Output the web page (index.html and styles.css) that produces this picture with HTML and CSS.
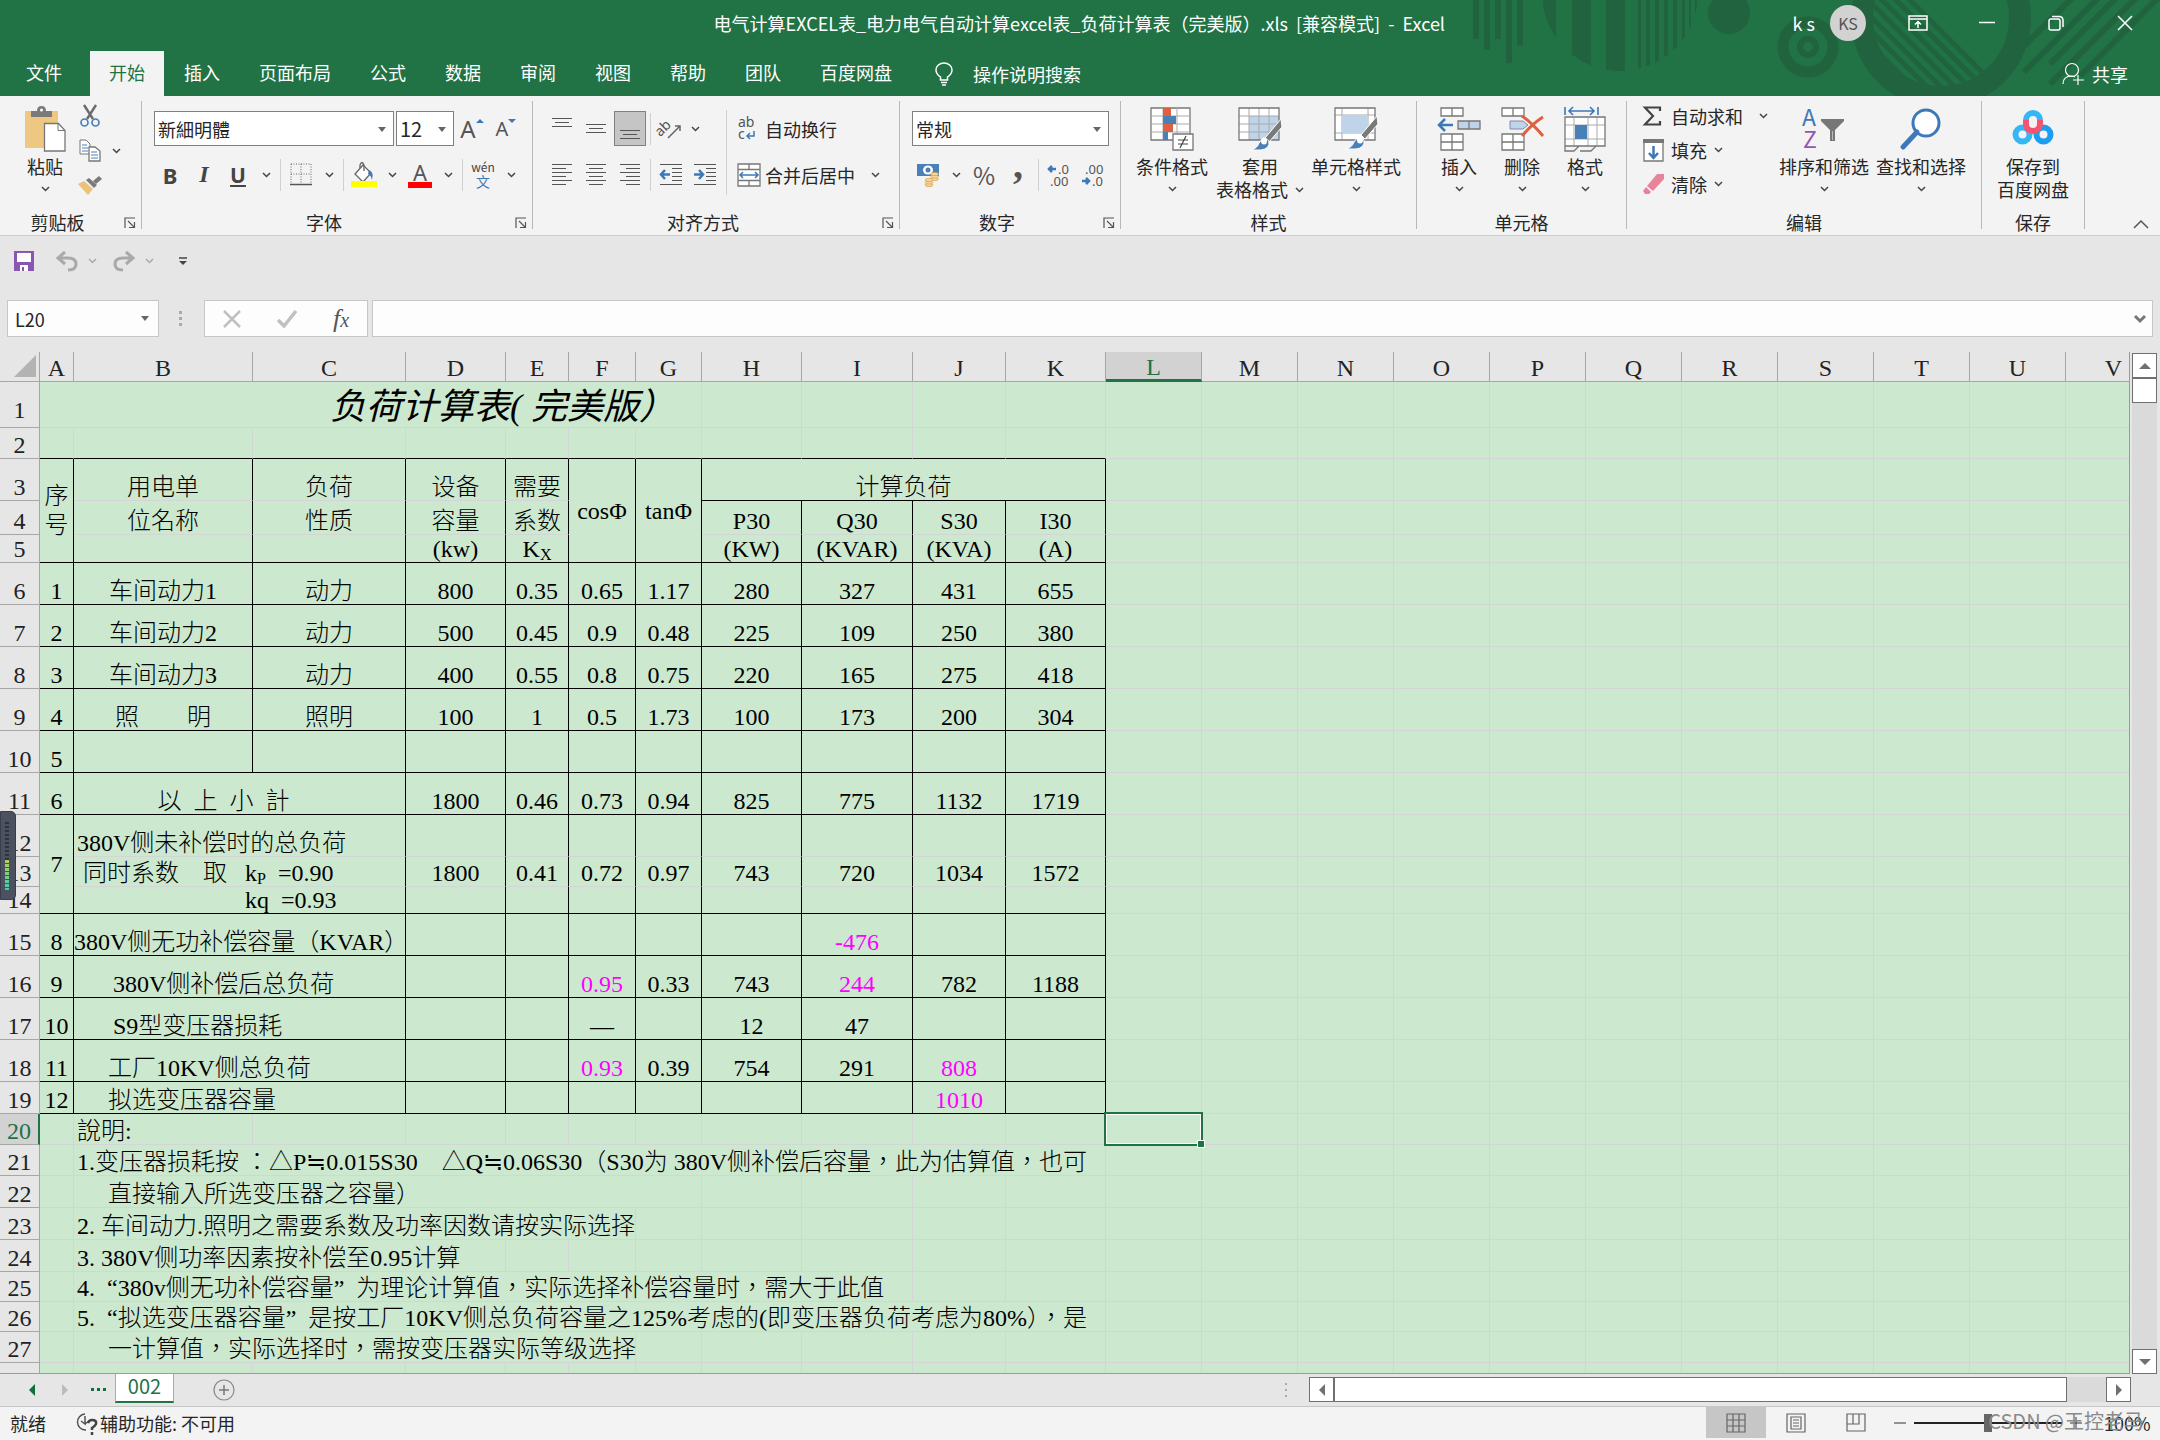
FILE: index.html
```html
<!DOCTYPE html>
<html lang="zh-CN">
<head>
    <meta charset="UTF-8">
    <meta name="viewport" content="width=device-width, initial-scale=1.0">
    <title>负荷计算表（完美版）.xls - Excel</title>
    <link rel="stylesheet" href="styles.css">
</head>
<body>
    <svg width="0" height="0" class="defs">
        <symbol id="chev" viewBox="0 0 9 6"><path d="M1 1l3.500 3.500L8 1" fill="none" stroke="currentColor" stroke-width="1.500"/></symbol>
        <symbol id="launch" viewBox="0 0 12 12"><path d="M1 11V1h10M4 4l6 6M10.500 5v5.500H5" fill="none" stroke="#555" stroke-width="1.200"/></symbol>
    </svg>

    <header class="top">
        <svg class="decor" width="740" height="96" viewBox="0 0 740 96">
            <defs>
                <clipPath id="c1"><circle cx="200" cy="-7" r="78"/></clipPath>
                <clipPath id="c2"><circle cx="521" cy="18" r="68"/></clipPath>
            </defs>
            <path d="M53 0h6v39h-6zM64 0h6v50h-6zM75 0h6v39h-6zM86 0h6v63h-6zM97 0h6v46h-6z"/>
            <path clip-path="url(#c1)" d="M123 0h13v96h-13zM152 0h19v96h-19zM186 0h19v96h-19zM218 0h3v96h-3zM226 0h4v96h-4zM235 0h4v96h-4zM244 0h4v96h-4zM253 0h4v96h-4zM262 0h3v96h-3zM269 0h2v96h-2zM275 0h2v96h-2z"/>
            <circle cx="309" cy="13" r="21"/>
            <g class="rings">
                <circle cx="388" cy="47" r="25" stroke-width="11"/>
                <circle cx="388" cy="47" r="8" stroke-width="6"/>
                <circle cx="521" cy="18" r="79" stroke-width="22"/>
                <path clip-path="url(#c2)" stroke-width="5" d="M400 -6l110 110M414 -6l110 110M428 -6l110 110M442 -6l110 110M456 -6l110 110M470 -6l110 110M484 -6l110 110"/>
                <path stroke-width="6" d="M658 -8l-54 54M684 -8l-80 80M702 -8l-72 72M722 -8l-92 92M744 -8l-84 84"/>
            </g>
        </svg>
        <div class="titlebar">
            <div class="title">电气计算EXCEL表_电力电气自动计算excel表_负荷计算表（完美版）.xls&nbsp; [兼容模式]&nbsp; -&nbsp; Excel</div>
            <div class="account">
                <span>k s</span>
                <span class="avatar">KS</span>
            </div>
            <button class="win" aria-label="功能区显示选项"><svg width="20" height="16"><path d="M1 1h18v14H1zM1 4h18M10 13V7M7 9.500l3-3 3 3" fill="none" stroke="#fff" stroke-width="1.500"/></svg></button>
            <button class="win" aria-label="最小化"><svg width="16" height="16"><path d="M0 7.500h16" stroke="#fff" stroke-width="1.500"/></svg></button>
            <button class="win" aria-label="还原"><svg width="16" height="16"><rect x="1" y="4" width="11" height="11" rx="2" fill="none" stroke="#fff" stroke-width="1.500"/><path d="M4 1.500h7q4 0 4 4V12" fill="none" stroke="#fff" stroke-width="1.500"/></svg></button>
            <button class="win" aria-label="关闭"><svg width="16" height="16"><path d="M1 1l14 14M15 1L1 15" stroke="#fff" stroke-width="1.500"/></svg></button>
        </div>
        <nav class="tabs">
            <a href="#" class="file">文件</a>
            <a href="#" class="active">开始</a>
            <a href="#">插入</a>
            <a href="#">页面布局</a>
            <a href="#">公式</a>
            <a href="#">数据</a>
            <a href="#">审阅</a>
            <a href="#">视图</a>
            <a href="#">帮助</a>
            <a href="#">团队</a>
            <a href="#">百度网盘</a>
            <a href="#" class="tell"><svg width="18" height="24"><path d="M5.500 18v-3Q1 12 1 8a8 7 0 0 1 16 0q0 4-4.500 7v3zM6 20.500h6M7 23h4" fill="none" stroke="#fff" stroke-width="1.500"/></svg>操作说明搜索</a>
            <a href="#" class="share"><svg width="22" height="24"><circle cx="10" cy="8" r="6.500" fill="none" stroke="#fff" stroke-width="1.200"/><path d="M1 22q0-8 9-8l3 1M16 13v10M11 18h11" fill="none" stroke="#fff" stroke-width="1.200"/></svg>共享</a>
        </nav>
    </header>

    <section class="ribbon">
        <div class="group g-clip">
            <div class="body">
                <button class="big">
                    <span class="pic"><svg width="42" height="46"><path d="M1 5h33v37H1z" fill="#eec882"/><path d="M7 5h6q0-5 4.500-5T22 5h6v6H7z" fill="#7a7a7a"/><circle cx="17.500" cy="4" r="1.500" fill="#fff"/><path d="M20.500 17.500h14l6.500 7v20.500H20.500z" fill="#fff" stroke="#777" stroke-width="1.300"/><path d="M34 17.500v7h7" fill="none" stroke="#777"/></svg></span>
                    <span>粘贴</span>
                    <svg class="chev"><use href="#chev"/></svg>
                </button>
                <div class="stack">
                    <button class="ib" aria-label="剪切"><svg width="20" height="22"><path d="M4 0l9 14M16 0L7 14" stroke="#6b6b6b" stroke-width="2.400"/><circle cx="4.500" cy="17.500" r="3.500" fill="none" stroke="#4a80b8" stroke-width="1.700"/><circle cx="15.500" cy="17.500" r="3.500" fill="none" stroke="#4a80b8" stroke-width="1.700"/></svg></button>
                    <div class="row"><button class="ib" aria-label="复制"><svg width="22" height="23"><path d="M1 1h6l4 4v10H1z" fill="#fff" stroke="#777"/><path d="M3 6h5M3 9h6M3 12h6" stroke="#4a80b8"/><path d="M10 8h6l5 4v10H10z" fill="#fff" stroke="#777" stroke-width="1.300"/><path d="M12 13h6M12 16h7M12 19h7" stroke="#4a80b8"/></svg></button><button class="drop" aria-label="复制选项"><svg class="chev"><use href="#chev"/></svg></button></div>
                    <button class="ib" aria-label="格式刷"><svg width="24" height="21"><path d="M0 9l10 11 5-6-9-8z" fill="#ecc27a"/><path d="M8 5l8 8 3-3-8-7z" fill="#7a7a7a"/><path d="M15 6l6-5 3 3-6 5z" fill="#7a7a7a"/></svg></button>
                </div>
            </div>
            <div class="label"><span>剪贴板</span><svg class="launch"><use href="#launch"/></svg></div>
        </div>

        <div class="group g-font">
            <div class="body rows">
                <div class="row">
                    <label class="combo font-name"><select aria-label="字体"><option>新細明體</option></select></label>
                    <label class="combo font-size"><select aria-label="字号"><option>12</option></select></label>
                    <button class="ib" aria-label="增大字号"><span class="glyph up">A</span><svg width="8" height="20"><path d="M0 4l4-4 4 4z" fill="#3d79b8"/></svg></button>
                    <button class="ib" aria-label="减小字号"><span class="glyph down">A</span><svg width="8" height="20"><path d="M0 0h8L4 4z" fill="#3d79b8"/></svg></button>
                </div>
                <div class="row">
                    <button class="ib glyph bold">B</button>
                    <button class="ib glyph ital">I</button>
                    <button class="ib glyph under">U</button>
                    <button class="drop" aria-label="下划线"><svg class="chev"><use href="#chev"/></svg></button>
                    <i class="sep"></i>
                    <button class="ib" aria-label="边框"><svg width="22" height="23"><path d="M1 1h20v20M1 1v20M11 1v20M1 11h20" fill="none" stroke="#666" stroke-dasharray="1 1.500"/><path d="M0 21.500h22" stroke="#555" stroke-width="1.500"/></svg></button>
                    <button class="drop" aria-label="边框选项"><svg class="chev"><use href="#chev"/></svg></button>
                    <i class="sep"></i>
                    <button class="ib" aria-label="填充颜色"><svg width="26" height="26"><path d="M12 3l8 8-8 9-8-8z" fill="#fff" stroke="#666" stroke-width="1.300"/><path d="M9 6V3q2-5 4 0v6" fill="none" stroke="#666" stroke-width="1.300"/><path d="M18 8q5 2 3 10-1-5-4-6z" fill="#3d79b8"/><path d="M0 19h26v6H0z" fill="#ff0"/></svg></button>
                    <button class="drop" aria-label="填充选项"><svg class="chev"><use href="#chev"/></svg></button>
                    <button class="ib color-a"><span class="glyph">A</span></button>
                    <button class="drop" aria-label="颜色选项"><svg class="chev"><use href="#chev"/></svg></button>
                    <i class="sep"></i>
                    <button class="ib pinyin"><span>wén</span><b>文</b></button>
                    <button class="drop" aria-label="拼音选项"><svg class="chev"><use href="#chev"/></svg></button>
                </div>
            </div>
            <div class="label"><span>字体</span><svg class="launch"><use href="#launch"/></svg></div>
        </div>

        <div class="group g-align">
            <div class="body">
                <div class="rows">
                    <div class="row">
                        <button class="ib" aria-label="顶端对齐"><svg class="lines" width="20" height="24"><path d="M0 1.500h20M3 5.500h14M0 9.500h20"/></svg></button>
                        <button class="ib" aria-label="垂直居中"><svg class="lines" width="20" height="24"><path d="M0 7.500h20M3 11.500h14M0 15.500h20"/></svg></button>
                        <button class="ib pressed" aria-label="底端对齐"><svg class="lines" width="20" height="24"><path d="M0 13.500h20M3 17.500h14M0 21.500h20"/></svg></button>
                        <i class="sep"></i>
                        <button class="ib" aria-label="方向"><svg width="22" height="22"><text x="-4" y="11" transform="rotate(-45 8 10)" class="ab">ab</text><path d="M8 20L20 8M20 13V8h-5" fill="none" stroke="#666" stroke-width="1.500"/></svg></button>
                        <button class="drop near" aria-label="方向选项"><svg class="chev"><use href="#chev"/></svg></button>
                    </div>
                    <div class="row">
                        <button class="ib" aria-label="左对齐"><svg class="lines" width="20" height="24"><path d="M0 1.500h20M0 5.500h14M0 9.500h20M0 13.500h14M0 17.500h20M0 21.500h14"/></svg></button>
                        <button class="ib" aria-label="居中"><svg class="lines" width="20" height="24"><path d="M0 1.500h20M3 5.500h14M0 9.500h20M3 13.500h14M0 17.500h20M3 21.500h14"/></svg></button>
                        <button class="ib" aria-label="右对齐"><svg class="lines" width="20" height="24"><path d="M0 1.500h20M6 5.500h14M0 9.500h20M6 13.500h14M0 17.500h20M6 21.500h14"/></svg></button>
                        <i class="sep"></i>
                        <button class="ib" aria-label="减少缩进"><svg class="lines" width="22" height="24"><path d="M0 1.500h22M12 5.500h10M12 9.500h10M12 13.500h10M12 17.500h10M0 21.500h22"/><path class="arrow" d="M10 11.500H1M5 7l-4 4.500L5 16"/></svg></button>
                        <button class="ib" aria-label="增加缩进"><svg class="lines" width="22" height="24"><path d="M0 1.500h22M12 5.500h10M12 9.500h10M12 13.500h10M12 17.500h10M0 21.500h22"/><path class="arrow" d="M0 11.500h9M5 7l4 4.500L5 16"/></svg></button>
                    </div>
                </div>
                <i class="sep tall"></i>
                <div class="rows">
                    <button class="text-btn"><span class="slot"><svg width="20" height="24"><text x="1" y="10" class="abc">ab</text><text x="1" y="22" class="abc">c</text><path d="M17 14v5h-7M13 16l-3 3 3 3" fill="none" stroke="#3d79b8" stroke-width="1.500"/></svg></span>自动换行</button>
                    <div class="row">
                        <button class="text-btn"><span class="slot"><svg width="24" height="24"><path d="M1 1h22v22H1zM1 6.500h22M1 17.500h22M12 1v5M12 18v5" fill="#fff" stroke="#777" stroke-width="1.300"/><path d="M3 12h18M6 9l-3 3 3 3M18 9l3 3-3 3" fill="none" stroke="#3d79b8" stroke-width="1.500"/></svg></span>合并后居中</button>
                        <button class="drop merge" aria-label="合并选项"><svg class="chev"><use href="#chev"/></svg></button>
                    </div>
                </div>
            </div>
            <div class="label"><span>对齐方式</span><svg class="launch"><use href="#launch"/></svg></div>
        </div>

        <div class="group g-num">
            <div class="body rows">
                <label class="combo num-format"><select aria-label="数字格式"><option>常规</option></select></label>
                <div class="row">
                    <button class="ib" aria-label="会计数字格式"><svg width="24" height="24"><path d="M1 1h22v12H1z" fill="#4a80b8"/><ellipse cx="12" cy="7" rx="5" ry="4.500" fill="#fff"/><circle cx="12" cy="7" r="2.500" fill="#4a80b8"/><g fill="#f4d7a3" stroke="#d9a54c" stroke-width=".8"><ellipse cx="18.500" cy="16" rx="4" ry="1.600"/><ellipse cx="18.500" cy="13.500" rx="4" ry="1.600"/><ellipse cx="18.500" cy="11" rx="4" ry="1.600"/><ellipse cx="13" cy="22" rx="4" ry="1.600"/><ellipse cx="13" cy="19.500" rx="4" ry="1.600"/><ellipse cx="13" cy="17" rx="4" ry="1.600"/></g></svg></button>
                    <button class="drop" aria-label="货币选项"><svg class="chev"><use href="#chev"/></svg></button>
                    <button class="ib percent">%</button>
                    <button class="ib comma">,</button>
                    <i class="sep"></i>
                    <button class="ib" aria-label="增加小数位数"><svg width="24" height="24"><text x="11" y="11" class="dec">.0</text><text x="3" y="23" class="dec">.00</text><path class="arrow" d="M9 6H2M5 3L2 6l3 3"/></svg></button>
                    <button class="ib" aria-label="减少小数位数"><svg width="24" height="24"><text x="4" y="11" class="dec">.00</text><text x="11" y="23" class="dec">.0</text><path class="arrow" d="M1 18h7M5 15l3 3-3 3"/></svg></button>
                </div>
            </div>
            <div class="label"><span>数字</span><svg class="launch"><use href="#launch"/></svg></div>
        </div>

        <div class="group g-style">
            <div class="body">
                <button class="big">
                    <span class="pic"><svg width="44" height="44"><path d="M1 1h39v32H1z" fill="#fff" stroke="#777" stroke-width="1.300"/><path d="M1 9h39M1 17h39M1 25h39M13 1v32M27 1v32" stroke="#aaa"/><path d="M13 1h8v8h-8zM13 17h10v8H13z" fill="#dd6041"/><path d="M13 9h13v8H13zM13 25h5v8h-5z" fill="#4a80b8"/><path d="M23 27h20v16H23z" fill="#fff" stroke="#777" stroke-width="1.300"/><path d="M28 33h10M28 37h10M36 29l-6 12" stroke="#444" stroke-width="1.200"/></svg></span>
                    <span>条件格式</span>
                    <svg class="chev"><use href="#chev"/></svg>
                </button>
                <button class="big">
                    <span class="pic"><svg width="44" height="44"><path d="M1 1h40v32H1z" fill="#fff"/><path d="M11 9h30v24H11z" fill="#bfd3e9"/><path d="M1 9h40M1 17h40M1 25h40M11 1v32M21 1v32M31 1v32" stroke="#aaa"/><path d="M1 1h40v32H1z" fill="none" stroke="#777" stroke-width="1.300"/><path d="M43 12L27 31l4 4 13-15z" fill="#7a7a7a" stroke="#fff"/><path d="M12 43q7-1 9-7 5-8 10-2 1 8-8 9z" fill="#4a80b8" stroke="#fff"/><ellipse cx="26" cy="34" rx="3" ry="3.500" fill="#fff"/></svg></span>
                    <span>套用</span>
                    <span>表格格式<svg class="chev"><use href="#chev"/></svg></span>
                </button>
                <button class="big">
                    <span class="pic"><svg width="44" height="44"><path d="M1 1h40v32H1z" fill="#fff"/><path d="M1 8h40M1 26h40M8 1v32M34 1v32" stroke="#aaa"/><path d="M8 8h26v18H8z" fill="#bfd3e9"/><path d="M1 1h40v32H1z" fill="none" stroke="#777" stroke-width="1.300"/><path d="M43 9L27 28l4 4 13-15z" fill="#7a7a7a" stroke="#fff"/><path d="M11 42q7-1 9-7 5-8 10-2 1 8-8 9z" fill="#4a80b8" stroke="#fff"/><ellipse cx="26" cy="33" rx="3" ry="3.500" fill="#fff"/></svg></span>
                    <span>单元格样式</span>
                    <svg class="chev"><use href="#chev"/></svg>
                </button>
            </div>
            <div class="label plain"><span>样式</span></div>
        </div>

        <div class="group g-cells">
            <div class="body">
                <button class="big">
                    <span class="pic"><svg width="44" height="44"><path d="M4 1h22v8H4zM15 1v8M4 27h22v16H4zM4 35h22M15 27v16" fill="#fff" stroke="#777" stroke-width="1.300"/><path d="M21 14h22v8H21zM32 14v8" fill="#bfd3e9" stroke="#777" stroke-width="1.300"/><path class="arrow" d="M16 18H2M8 12l-6 6 6 6"/></svg></span>
                    <span>插入</span>
                    <svg class="chev"><use href="#chev"/></svg>
                </button>
                <button class="big">
                    <span class="pic"><svg width="44" height="44"><path d="M2 1h22v8H2zM13 1v8M2 27h22v16H2zM2 35h22M13 27v16" fill="#fff" stroke="#777" stroke-width="1.300"/><path d="M10 14h13l5 4-5 4H10z" fill="#bfd3e9" stroke="#88a" stroke-width="1"/><path d="M22 9q10 7 21 20M43 10Q32 17 22 29" fill="none" stroke="#dd6041" stroke-width="3"/></svg></span>
                    <span>删除</span>
                    <svg class="chev"><use href="#chev"/></svg>
                </button>
                <button class="big">
                    <span class="pic"><svg width="42" height="46"><path d="M1 12h40v28H1z" fill="#fff"/><path d="M1 19h40M1 33h40M10 12v28M24 12v28M33 12v28" stroke="#aaa"/><path d="M11 19h12v14H11z" fill="#4a80b8"/><path d="M1 11h40v29H1zM1 40v5h9l5-5M16 45h11l5-5" fill="none" stroke="#777" stroke-width="1.300"/><path d="M1 1v8M34 1v8M5 5h25M9 1L5 5l4 4M26 1l4 4-4 4" fill="none" stroke="#3d79b8" stroke-width="1.600"/></svg></span>
                    <span>格式</span>
                    <svg class="chev"><use href="#chev"/></svg>
                </button>
            </div>
            <div class="label plain"><span>单元格</span></div>
        </div>

        <div class="group g-edit">
            <div class="body">
                <div class="stack">
                    <button class="text-btn"><span class="slot"><svg width="18" height="20"><path d="M17 5V1.500H2l8 8.500-8 8.500h15V15" fill="none" stroke="#444" stroke-width="2.200"/></svg></span>自动求和<svg class="chev far"><use href="#chev"/></svg></button>
                    <button class="text-btn"><span class="slot"><svg width="21" height="23"><path d="M1 1h19v21H1z" fill="#fff" stroke="#777" stroke-width="1.300"/><path d="M0 0h21v4H0z" fill="#777"/><path class="arrow" d="M10.500 7v12M6 14l4.500 5 4.500-5"/></svg></span>填充<svg class="chev"><use href="#chev"/></svg></button>
                    <button class="text-btn"><span class="slot"><svg width="22" height="20"><path d="M14 0h7v5L10 17l-6-5z" fill="#e8849a"/><path d="M3 13l5 5-2 2H2l-2-3z" fill="#e8849a"/></svg></span>清除<svg class="chev"><use href="#chev"/></svg></button>
                </div>
                <button class="big">
                    <span class="pic"><svg width="44" height="42"><text x="0" y="18" class="sort a">A</text><text x="1" y="40" class="sort z">Z</text><path d="M19 11h23v2l-9 9v11h-5V22l-9-9z" fill="#777"/><path d="M30.500 23v9" stroke="#bbb"/></svg></span>
                    <span>排序和筛选</span>
                    <svg class="chev"><use href="#chev"/></svg>
                </button>
                <button class="big">
                    <span class="pic"><svg width="42" height="42"><circle cx="26" cy="15" r="13" fill="#fff" stroke="#3d79b8" stroke-width="3"/><path d="M17 24L3 39" stroke="#3d79b8" stroke-width="5" stroke-linecap="round"/></svg></span>
                    <span>查找和选择</span>
                    <svg class="chev"><use href="#chev"/></svg>
                </button>
            </div>
            <div class="label plain"><span>编辑</span></div>
        </div>

        <div class="group g-save">
            <div class="body">
                <button class="big">
                    <span class="pic"><svg width="40" height="34" fill="none" stroke-width="6"><circle cx="9.500" cy="22.500" r="7" stroke="#35b6f5"/><circle cx="30.500" cy="22.500" r="7" stroke="#1e9cf0"/><path d="M13 8a7 7 0 0 1 14 0" stroke="#35b6f5"/><path d="M13 8v4a7 7 0 0 0 14 0V8" stroke="#f4546e"/></svg></span>
                    <span>保存到</span>
                    <span>百度网盘</span>
                </button>
            </div>
            <div class="label plain"><span>保存</span></div>
        </div>
        <button class="collapse" aria-label="折叠功能区"><svg width="16" height="9"><path d="M1 8l7-7 7 7" fill="none" stroke="#555" stroke-width="1.500"/></svg></button>
    </section>

    <div class="qat">
        <button aria-label="保存"><svg width="20" height="20"><path d="M0 0h20v20H0z" fill="#8a57b0"/><path d="M3 2h14v9H3zM6 14h8v6H6z" fill="#fff"/><path d="M8 16h2v4H8z" fill="#8a57b0"/></svg></button>
        <button aria-label="撤销"><svg width="22" height="20"><path d="M9 1L2 7l7 6M3 7h9q8 0 8 6t-8 6" fill="none" stroke="#a9a9a9" stroke-width="3"/></svg><svg class="chev dim"><use href="#chev"/></svg></button>
        <button aria-label="恢复"><svg width="22" height="20"><path d="M13 1l7 6-7 6M19 7h-9q-8 0-8 6t8 6" fill="none" stroke="#a9a9a9" stroke-width="3"/></svg><svg class="chev dim"><use href="#chev"/></svg></button>
        <button class="more" aria-label="自定义"><svg width="8" height="9"><path d="M0 1h8" stroke="#444" stroke-width="1.500"/><path d="M0 4h8L4 8z" fill="#444"/></svg></button>
    </div>

    <div class="formula-bar">
        <div class="name-box"><input type="text" value="L20" aria-label="名称框"></div>
        <svg width="4" height="16"><path d="M0 0h3v3H0zM0 6h3v3H0zM0 12h3v3H0z" fill="#aaa"/></svg>
        <div class="fx">
            <button aria-label="取消"><svg width="18" height="18"><path d="M1 1l16 16M17 1L1 17" stroke="#c0c0c0" stroke-width="2.500"/></svg></button>
            <button aria-label="输入"><svg width="20" height="18"><path d="M1 10l6 6L19 1" fill="none" stroke="#c0c0c0" stroke-width="3.500"/></svg></button>
            <button class="fn"><i>f<small>x</small></i></button>
        </div>
        <div class="formula"><input type="text" aria-label="编辑栏"><svg width="12" height="8"><path d="M1 1l5 5 5-5" fill="none" stroke="#777" stroke-width="3"/></svg></div>
    </div>

    <main class="work">
        <div class="view">
            <table class="sheet" lang="zh-TW">
                <colgroup>
                    <col class="w40"><col class="w34"><col class="w179"><col class="w153"><col class="w100"><col class="w63"><col class="w67"><col class="w66"><col class="w100"><col class="w111"><col class="w93"><col class="w100">
                    <col class="w96" span="11">
                </colgroup>
                <thead>
                    <tr>
                        <th class="corner"><svg width="22" height="22"><path d="M22 0v22H0z" fill="#b3b3b3"/></svg></th>
                        <th>A</th><th>B</th><th>C</th><th>D</th><th>E</th><th>F</th><th>G</th><th>H</th><th>I</th><th>J</th><th>K</th>
                        <th class="sel">L</th><th>M</th><th>N</th><th>O</th><th>P</th><th>Q</th><th>R</th><th>S</th><th>T</th><th>U</th><th>V</th>
                    </tr>
                </thead>
                <tbody>
                    <tr class="h46"><th>1</th><td colspan="7" class="heading">负荷计算表( 完美版）</td><td></td><td></td><td></td><td></td></tr>
                    <tr class="h31 edge"><th>2</th><td></td><td></td><td></td><td></td><td></td><td></td><td></td><td></td><td></td><td></td><td></td></tr>
                    <tr class="h42 box open"><th>3</th><td rowspan="3" class="mid end tall-line">序<br>号</td><td>用电单</td><td>负荷</td><td>设备</td><td>需要</td><td rowspan="3" class="mid end">cosΦ</td><td rowspan="3" class="mid end">tanΦ</td><td colspan="4" class="end">计算负荷</td></tr>
                    <tr class="h34 box open"><th>4</th><td>位名称</td><td>性质</td><td>容量</td><td>系数</td><td>P30</td><td>Q30</td><td>S30</td><td>I30</td></tr>
                    <tr class="h28 box"><th>5</th><td></td><td></td><td>(kw)</td><td>K<sub>X</sub></td><td>(KW)</td><td>(KVAR)</td><td>(KVA)</td><td>(A)</td></tr>
                    <tr class="h42 box"><th>6</th><td>1</td><td>车间动力1</td><td>动力</td><td>800</td><td>0.35</td><td>0.65</td><td>1.17</td><td>280</td><td>327</td><td>431</td><td>655</td></tr>
                    <tr class="h42 box"><th>7</th><td>2</td><td>车间动力2</td><td>动力</td><td>500</td><td>0.45</td><td>0.9</td><td>0.48</td><td>225</td><td>109</td><td>250</td><td>380</td></tr>
                    <tr class="h42 box"><th>8</th><td>3</td><td>车间动力3</td><td>动力</td><td>400</td><td>0.55</td><td>0.8</td><td>0.75</td><td>220</td><td>165</td><td>275</td><td>418</td></tr>
                    <tr class="h42 box"><th>9</th><td>4</td><td>照　　明</td><td>照明</td><td>100</td><td>1</td><td>0.5</td><td>1.73</td><td>100</td><td>173</td><td>200</td><td>304</td></tr>
                    <tr class="h42 box"><th>10</th><td>5</td><td></td><td></td><td></td><td></td><td></td><td></td><td></td><td></td><td></td><td></td></tr>
                    <tr class="h42 box"><th>11</th><td>6</td><td colspan="2" class="subtotal">以&nbsp; 上&nbsp; 小&nbsp; 計</td><td>1800</td><td>0.46</td><td>0.73</td><td>0.94</td><td>825</td><td>775</td><td>1132</td><td>1719</td></tr>
                    <tr class="h42 box open"><th>12</th><td rowspan="3" class="mid end">7</td><td colspan="2" class="note">380V侧未补偿时的总负荷</td><td></td><td></td><td></td><td></td><td></td><td></td><td></td><td></td></tr>
                    <tr class="h30 box open"><th>13</th><td colspan="2" class="note">&nbsp;同时系数　取&nbsp;&nbsp; k<sub>P</sub>&nbsp; =0.90</td><td>1800</td><td>0.41</td><td>0.72</td><td>0.97</td><td>743</td><td>720</td><td>1034</td><td>1572</td></tr>
                    <tr class="h27 box"><th>14</th><td colspan="2" class="note kq">kq&nbsp; =0.93</td><td></td><td></td><td></td><td></td><td></td><td></td><td></td><td></td></tr>
                    <tr class="h42 box"><th>15</th><td>8</td><td colspan="2" class="flush">380V侧无功补偿容量（KVAR）</td><td></td><td></td><td></td><td></td><td></td><td class="pink">-476</td><td></td><td></td></tr>
                    <tr class="h42 box"><th>16</th><td>9</td><td colspan="2" class="note deep">380V侧补偿后总负荷</td><td></td><td></td><td class="pink">0.95</td><td>0.33</td><td>743</td><td class="pink">244</td><td>782</td><td>1188</td></tr>
                    <tr class="h42 box"><th>17</th><td>10</td><td colspan="2" class="note deep">S9型变压器损耗</td><td></td><td></td><td>—</td><td></td><td>12</td><td>47</td><td></td><td></td></tr>
                    <tr class="h42 box"><th>18</th><td>11</td><td colspan="2" class="note in">工厂10KV侧总负荷</td><td></td><td></td><td class="pink">0.93</td><td>0.39</td><td>754</td><td>291</td><td class="pink">808</td><td></td></tr>
                    <tr class="h32 box"><th>19</th><td>12</td><td colspan="2" class="note in">拟选变压器容量</td><td></td><td></td><td></td><td></td><td></td><td></td><td class="pink">1010</td><td></td></tr>
                    <tr class="h31 current"><th>20</th><td></td><td class="note">說明:</td><td></td><td></td><td></td><td></td><td></td><td></td><td></td><td></td><td></td></tr>
                    <tr class="h31"><th>21</th><td></td><td colspan="10" class="note">1.变压器损耗按&nbsp;：△P≒0.015S30　△Q≒0.06S30（S30为 380V侧补偿后容量，此为估算值，也可</td></tr>
                    <tr class="h32"><th>22</th><td></td><td colspan="6" class="note in">直接输入所选变压器之容量）</td><td></td><td></td><td></td><td></td></tr>
                    <tr class="h32"><th>23</th><td></td><td colspan="5" class="note">2. 车间动力.照明之需要系数及功率因数请按实际选择</td><td></td><td></td><td></td><td></td><td></td></tr>
                    <tr class="h32"><th>24</th><td></td><td colspan="3" class="note">3. 380V侧功率因素按补偿至0.95计算</td><td></td><td></td><td></td><td></td><td></td><td></td><td></td></tr>
                    <tr class="h30"><th>25</th><td></td><td colspan="8" class="note">4.&nbsp; “380v侧无功补偿容量”&nbsp; 为理论计算值，实际选择补偿容量时，需大于此值</td><td></td><td></td></tr>
                    <tr class="h30"><th>26</th><td></td><td colspan="10" class="note">5.&nbsp; “拟选变压器容量”&nbsp; 是按工厂10KV侧总负荷容量之125%考虑的(即变压器负荷考虑为80%），是</td></tr>
                    <tr class="h31"><th>27</th><td></td><td colspan="5" class="note in">一计算值，实际选择时，需按变压器实际等级选择</td><td></td><td></td><td></td><td></td><td></td></tr>
                    <tr class="h31"><th>28</th><td></td><td></td><td></td><td></td><td></td><td></td><td></td><td></td><td></td><td></td><td></td></tr>
                </tbody>
            </table>
        </div>
        <div class="vscroll">
            <button aria-label="向上"><svg width="12" height="6"><path d="M0 6l6-6 6 6z" fill="#707070"/></svg></button>
            <div class="thumb"></div>
            <button class="last" aria-label="向下"><svg width="12" height="6"><path d="M0 0h12L6 6z" fill="#707070"/></svg></button>
        </div>
    </main>
    <div class="meter"><i></i><b></b></div>

    <div class="sheet-tabs">
        <div class="tab-nav">
            <button aria-label="上一张"><svg width="6" height="12"><path d="M6 0v12L0 6z" fill="#0f703b"/></svg></button>
            <button aria-label="下一张"><svg width="6" height="12"><path d="M0 0v12l6-6z" fill="#bbb"/></svg></button>
            <button aria-label="更多工作表"><svg width="16" height="4"><path d="M0 0h3v3H0zM6 0h3v3H6zM12 0h3v3h-3z" fill="#0f703b"/></svg></button>
        </div>
        <a href="#" class="sheet-tab">002</a>
        <button class="add" aria-label="新工作表"><svg width="22" height="22"><circle cx="11" cy="11" r="10" fill="none" stroke="#888" stroke-width="1.200"/><path d="M11 6v10M6 11h10" stroke="#777" stroke-width="1.500"/></svg></button>
        <div class="hscroll">
            <svg width="4" height="16"><path d="M1 1h2v2H1zM1 7h2v2H1zM1 13h2v2H1z" fill="#aaa"/></svg>
            <button aria-label="向左"><svg width="6" height="12"><path d="M6 0v12L0 6z" fill="#707070"/></svg></button>
            <div class="track"><div class="thumb"></div></div>
            <button aria-label="向右"><svg width="6" height="12"><path d="M0 0v12l6-6z" fill="#707070"/></svg></button>
        </div>
    </div>

    <footer class="status">
        <span>就绪</span>
        <span class="access"><svg width="22" height="24"><path d="M9 3A8 8 0 1 0 10 19M9 5v8l-4-3M9 13l4-3" fill="none" stroke="#555" stroke-width="1.500"/><path d="M12 12q1-3 4-3 5 0 4 4-1 2-4 4v2M16 21v3" fill="none" stroke="#444" stroke-width="2.500"/></svg>辅助功能: 不可用</span>
        <div class="views">
            <button class="on" aria-label="普通"><svg width="20" height="20"><path d="M1 1h18v18H1zM7 1v18M13 1v18M1 7h18M1 13h18" fill="none" stroke="#666" stroke-width="1.200"/></svg></button>
            <button aria-label="页面布局"><svg width="20" height="20"><path d="M1 1h18v18H1zM5 4h10v12H5zM7 7h6M7 10h6M7 13h6" fill="none" stroke="#666" stroke-width="1.200"/></svg></button>
            <button aria-label="分页预览"><svg width="20" height="20"><path d="M1 1h18v17H1zM1 11h12V1M7 1v10" fill="none" stroke="#666" stroke-width="1.200"/></svg></button>
        </div>
        <button class="step" aria-label="缩小"><svg width="12" height="12"><path d="M0 6h12" stroke="#333"/></svg></button>
        <input type="range" class="zoom" min="0" max="100" value="50" aria-label="缩放">
        <button class="step" aria-label="放大"><svg width="12" height="12"><path d="M0 6h12M6 0v12" stroke="#333"/></svg></button>
        <span class="pct">100%</span>
        <span class="mark">CSDN @王控老马</span>
    </footer>

    <script>
        // empty columns L..V
        document.querySelectorAll(".sheet tbody tr").forEach(function (tr) {
            for (let i = 0; i < 11; i++) {
                const td = document.createElement("td");
                td.className = "blank";
                if (i === 0 && tr.classList.contains("current")) {
                    td.innerHTML = '<div class="cursor"></div>';
                }
                tr.appendChild(td);
            }
        });
    </script>
</body>
</html>
```
FILE: styles.css
```css
* {
    box-sizing: border-box;
}

body {
    margin: 0;
    height: 100vh;
    display: flex;
    flex-direction: column;
    overflow: hidden;
    position: relative;
    font-family: "Noto Sans CJK SC", "Noto Sans", sans-serif;
    font-size: 18px;
    color: #262626;
    background-color: #e6e6e6;
}

button, select, input {
    font: inherit;
    color: inherit;
    border: none;
    background: none;
    padding: 0;
    margin: 0;
}

a {
    color: inherit;
    text-decoration: none;
}

svg {
    display: block;
    flex: none;
    overflow: visible;
}

.defs {
    position: absolute;
}

.chev {
    width: 9px;
    height: 6px;
    color: #444;
}

.launch {
    width: 12px;
    height: 12px;
}

.arrow {
    fill: none;
    stroke: #3d79b8;
    stroke-width: 2.5;
}

/* title bar and tabs */
.top {
    position: relative;
    background-color: #217346;
    color: #fff;
    flex: none;
    overflow: hidden;
}

.decor {
    position: absolute;
    right: 0;
    top: 0;
    fill: #21633e;
}

.rings {
    fill: none;
    stroke: #21633e;
}

.titlebar, .tabs {
    position: relative;
    display: flex;
    align-items: center;
}

.titlebar {
    height: 51px;
    padding-bottom: 5px;
    padding-right: 1px;
}

.title {
    flex: 1;
    text-align: center;
    padding-left: 366px;
    white-space: nowrap;
}

.account {
    display: flex;
    align-items: center;
    gap: 15px;
    margin-right: 17px;
}

.avatar {
    width: 36px;
    height: 36px;
    border-radius: 50%;
    background-color: #d2d2d2;
    color: #555;
    font-size: 16px;
    line-height: 36px;
    text-align: center;
}

.win {
    width: 69px;
    height: 40px;
    display: flex;
    align-items: center;
    justify-content: center;
}

.tabs {
    height: 45px;
    gap: 1px;
    padding-left: 7px;
}

.tabs a {
    height: 45px;
    line-height: 42px;
    padding: 0 19px;
}

.tabs .file {
    padding-right: 27px;
}

.tabs .active {
    background-color: #f3f3f3;
    color: #217346;
}

.tabs .tell, .tabs .share {
    display: flex;
    align-items: center;
    gap: 20px;
    padding-left: 23px;
}

.tabs .share {
    margin-left: auto;
    gap: 8px;
    padding-right: 32px;
}

/* ribbon */
.ribbon {
    flex: none;
    display: flex;
    height: 140px;
    padding: 5px 0 6px;
    background-color: #f3f3f3;
    border-bottom: 1px solid #d0d0d0;
    white-space: nowrap;
}

.group {
    display: flex;
    flex-direction: column;
    border-right: 1px solid #b8b8b8;
}

.g-clip { width: 142px; }
.g-font { width: 391px; }
.g-align { width: 367px; }
.g-num { width: 221px; }
.g-style { width: 296px; }
.g-cells { width: 210px; }
.g-edit { width: 355px; }
.g-save { width: 103px; }

.body {
    height: 109px;
    display: flex;
    padding-left: 12px;
}

.rows {
    display: flex;
    flex-direction: column;
    gap: 11px;
    padding-top: 10px;
}

.row {
    display: flex;
    align-items: center;
    gap: 2px;
}

.g-clip .body { padding-left: 22px; gap: 6px; }
.g-clip .row { gap: 0; }
.g-align .body { padding-left: 13px; }
.g-style .body { gap: 4px; }
.g-cells .body { padding-left: 13px; gap: 5px; }
.g-edit .body { padding-left: 16px; gap: 5px; }
.g-save .body { padding-left: 0; justify-content: center; }

.label {
    height: 19px;
    line-height: 24px;
    display: flex;
    align-items: flex-start;
}

.label span {
    flex: 1;
    text-align: center;
    margin-right: 9px;
}

.plain span {
    margin-right: 0;
}

.label .launch {
    margin-right: 5px;
    align-self: flex-end;
}

.ib {
    width: 32px;
    height: 35px;
    display: flex;
    align-items: center;
    justify-content: center;
}

.stack {
    margin-top: -2px;
}

.stack .ib, .stack .text-btn {
    height: 34px;
}

.pressed {
    background-color: #c5c5c5;
    border: 1px solid #808080;
}

.drop {
    width: 20px;
    height: 35px;
    display: flex;
    align-items: center;
    justify-content: center;
}

.near {
    width: 12px;
}

.merge {
    margin-left: 8px;
}

.sep {
    width: 1px;
    height: 32px;
    margin: 0 2px;
    background-color: #d0d0d0;
}

.sep.tall {
    height: 85px;
    margin: 9px 6px 0 5px;
}

.big {
    padding-top: 2px;
    display: flex;
    flex-direction: column;
    align-items: center;
    line-height: 23px;
    align-self: flex-start;
}

.big span {
    display: flex;
    align-items: center;
    gap: 7px;
}

.big > .chev {
    margin-top: 8px;
}

.big .pic {
    height: 52px;
}

.g-clip .big { width: 46px; }
.g-style .big { width: 78px; }
.g-style .big:nth-child(2) { width: 90px; }
.g-style .big:nth-child(3) { width: 94px; }
.g-cells .big { width: 58px; }
.g-edit .big { width: 92px; }
.g-edit .stack { width: 130px; }

.text-btn {
    height: 35px;
    display: flex;
    align-items: center;
    padding-left: 4px;
}

.stack .text-btn {
    padding-left: 0;
}

.slot {
    width: 28px;
}

.text-btn .chev {
    margin-left: 7px;
}

.text-btn .far {
    margin-left: 16px;
}

.combo {
    position: relative;
    height: 35px;
    background-color: #fff;
    border: 1px solid #808080;
}

.combo::after, .name-box::after {
    content: "";
    position: absolute;
    right: 7px;
    top: 15px;
    border: 4px solid transparent;
    border-top: 5px solid #666;
    border-bottom: none;
}

.combo select {
    appearance: none;
    width: 100%;
    height: 33px;
    padding-left: 3px;
}

.font-name { width: 240px; }
.font-size { width: 58px; }
.num-format { width: 197px; }

.font-size select {
    font-size: 20px;
}

.glyph {
    font-family: "Noto Sans", sans-serif;
    color: #555;
    line-height: 24px;
}

.up { font-size: 24px; }
.down { font-size: 20px; }
.bold { font-size: 22px; font-weight: bold; color: #444; }
.ital { font: italic bold 24px "Liberation Serif", serif; color: #444; }
.under { font-size: 21px; font-weight: bold; text-decoration: underline; color: #444; }

.color-a span {
    font-size: 22px;
    line-height: 20px;
    width: 24px;
    border-bottom: 6px solid #f00;
}

.pinyin {
    flex-direction: column;
    font-size: 12px;
    line-height: 12px;
    color: #444;
}

.pinyin b {
    font-size: 14px;
    line-height: 16px;
    font-weight: normal;
    color: #3d79b8;
}

.lines {
    stroke: #555;
    stroke-width: 1;
}

.ab, .abc, .dec {
    font-family: "Noto Sans", sans-serif;
    font-size: 14px;
    fill: #555;
    stroke: none;
}

.dec { font-size: 13px; }

.percent {
    font-size: 24px;
    color: #555;
}

.comma {
    font: bold 40px/20px "Liberation Serif", serif;
    color: #555;
    padding-bottom: 20px;
}

.sort {
    font-size: 23px;
}

.sort.a { fill: #3d79b8; }
.sort.z { fill: #9256b4; }

.collapse {
    margin-left: auto;
    margin-right: 11px;
    align-self: flex-end;
}

/* quick access */
.qat {
    flex: none;
    height: 50px;
    display: flex;
    align-items: center;
    padding-left: 14px;
    gap: 22px;
}

.qat button {
    display: flex;
    align-items: center;
    gap: 10px;
}

.qat button + button + button {
    margin-left: -6px;
}

.qat button.more {
    margin-left: 3px;
}

.chev.dim {
    color: #aaa;
}

.formula-bar {
    flex: none;
    height: 66px;
    display: flex;
    align-items: center;
    padding: 0 7px 1px;
}

.name-box, .fx, .formula {
    position: relative;
    height: 37px;
    background-color: #fdfdfd;
    border: 1px solid #c6c6c6;
    display: flex;
    align-items: center;
}

.name-box {
    width: 152px;
    margin-right: 20px;
}

.name-box::after {
    right: 9px;
}

.name-box input {
    width: 100%;
    padding-left: 7px;
}

.fx {
    width: 164px;
    margin: 0 4px 0 21px;
    padding-left: 18px;
    gap: 36px;
}

.fn {
    font: 26px "Liberation Serif", serif;
    color: #555;
}

.fn small {
    font-size: 20px;
}

.formula {
    flex: 1;
    padding-right: 6px;
}

.formula input {
    flex: 1;
}

/* grid */
.work {
    flex: 1;
    min-height: 0;
    display: flex;
}

.view {
    flex: 1;
    min-width: 0;
    overflow: hidden;
    border-right: 1px solid #9b9b9b;
    border-bottom: 1px solid #9b9b9b;
    background-color: #cce8cf;
}

.sheet {
    table-layout: fixed;
    width: 2162px;
    border-collapse: separate;
    border-spacing: 0;
    font-family: "Liberation Serif", "Noto Sans CJK TC", serif;
    font-size: 24px;
    font-weight: 300;
    line-height: 26px;
    color: #000;
}

.w34 { width: 34px; }
.w40 { width: 40px; }
.w63 { width: 63px; }
.w66 { width: 66px; }
.w67 { width: 67px; }
.w93 { width: 93px; }
.w96 { width: 96px; }
.w100 { width: 100px; }
.w111 { width: 111px; }
.w153 { width: 153px; }
.w179 { width: 179px; }

.h27 { height: 27px; }
.h28 { height: 28px; }
.h30 { height: 30px; }
.h31 { height: 31px; }
.h32 { height: 32px; }
.h34 { height: 34px; }
.h42 { height: 42px; }
.h46 { height: 46px; }

.sheet th, .sheet td {
    padding: 0;
    text-align: center;
    vertical-align: bottom;
    white-space: nowrap;
    font-weight: 300;
    border-right: 1px solid #d3d5d6;
    border-bottom: 1px solid #d3d5d6;
}

.sheet th {
    background-color: #e6e6e6;
    color: #222;
    border-color: #a6a6a6;
}

.sheet thead th {
    height: 30px;
}

.sheet .h46 th {
    padding-bottom: 4px;
}

.sheet .corner svg {
    margin: 0 0 4px 14px;
}

.sheet thead .sel {
    background-color: #d2d2d2;
    color: #217346;
    border-bottom: 3px solid #217346;
    line-height: 24px;
}

.sheet .current th {
    background-color: #d2d2d2;
    color: #217346;
    border-right: 2px solid #217346;
}

.edge td:not(.blank), .box td:not(.blank) {
    border-bottom-color: #000;
}

.box td:not(.blank) {
    border-right-color: #000;
}

.open td:not(.end):not(.blank) {
    border-bottom-color: #d3d5d6;
}

.sheet .heading {
    font-size: 36px;
    font-style: italic;
    font-weight: 400;
    line-height: 40px;
    text-align: left;
    padding-left: 290px;
}

.sheet .mid {
    vertical-align: middle;
}

.sheet .tall-line {
    line-height: 29px;
}

.sheet .note {
    text-align: left;
    padding-left: 3px;
}

.sheet .in {
    padding-left: 34px;
}

.sheet .deep {
    padding-left: 39px;
}

.sheet .kq {
    padding-left: 171px;
}

.sheet .flush {
    text-align: left;
}

.sheet .subtotal {
    padding-right: 32px;
}

.sheet .pink {
    color: #f0f;
}

.sheet sub {
    font-size: 16px;
    line-height: 0;
    vertical-align: -3px;
}

.sheet .blank {
    position: relative;
}

.cursor {
    position: absolute;
    left: -2px;
    top: -2px;
    right: -2px;
    bottom: -2px;
    border: 2px solid #217346;
    box-shadow: inset 0 0 0 1px #fff;
    z-index: 1;
}

.cursor::after {
    content: "";
    position: absolute;
    right: -3px;
    bottom: -3px;
    width: 6px;
    height: 6px;
    background-color: #217346;
    outline: 1px solid #fff;
}

.vscroll {
    width: 25px;
    margin: 1px 3px 0 2px;
    background-color: #dadada;
    display: flex;
    flex-direction: column;
}

.vscroll button, .vscroll .thumb, .hscroll button, .track .thumb {
    width: 25px;
    height: 25px;
    background-color: #fff;
    border: 1px solid #707070;
    display: flex;
    align-items: center;
    justify-content: center;
}

.vscroll .last {
    margin-top: auto;
}

/* level meter docked on the left edge */
.meter {
    position: absolute;
    left: 0;
    top: 811px;
    width: 16px;
    height: 89px;
    padding: 10px 6px 10px 4px;
    border-radius: 0 5px 5px 0;
    background-color: #4c5160;
    border: 1px solid #3a3d48;
}

.meter i, .meter b {
    display: block;
    height: 38px;
    background: repeating-linear-gradient(#2f323c 0 2px, transparent 2px 4px);
}

.meter b {
    height: 30px;
    background: repeating-linear-gradient(transparent 0 3px, #4c5160 3px 4px), linear-gradient(#b5cf5c, #45c8b4);
}

/* sheet tabs */
.sheet-tabs {
    flex: none;
    height: 32px;
    display: flex;
    align-items: flex-start;
}

.tab-nav {
    width: 115px;
    height: 32px;
    padding-left: 29px;
    display: flex;
    align-items: center;
    gap: 27px;
}

.tab-nav button:last-child {
    margin-left: -4px;
}

.sheet-tab {
    width: 59px;
    height: 29px;
    margin-right: 39px;
    background-color: #fff;
    border: 1px solid #ababab;
    border-top: none;
    border-bottom: 2px solid #217346;
    color: #217346;
    font-size: 20px;
    line-height: 23px;
    text-align: center;
}

.add {
    align-self: center;
}

.hscroll {
    width: 847px;
    margin: 3px 29px 0 auto;
    display: flex;
    align-items: center;
}

.hscroll > svg {
    margin-right: 21px;
}

.track {
    flex: 1;
    background-color: #dadada;
}

.track .thumb {
    width: 95%;
}

/* status bar */
.status {
    flex: none;
    position: relative;
    height: 34px;
    display: flex;
    align-items: center;
    padding: 0 12px 2px 10px;
    background-color: #f3f3f3;
    border-top: 1px solid #c6c6c6;
}

.access {
    display: flex;
    align-items: center;
    gap: 2px;
    margin-left: 30px;
}

.views {
    display: flex;
    margin-left: auto;
}

.views button {
    width: 60px;
    height: 31px;
    display: flex;
    align-items: center;
    justify-content: center;
}

.views .on {
    background-color: #c6c6c6;
}

.step {
    margin: 0 8px;
}

.zoom {
    appearance: none;
    width: 148px;
    height: 18px;
    background: linear-gradient(#222, #222) center / 100% 2px no-repeat;
}

.zoom::-webkit-slider-thumb {
    appearance: none;
    width: 8px;
    height: 18px;
    background-color: #666;
}

.pct {
    margin-left: 14px;
    width: 44px;
    text-align: right;
}

.mark {
    position: absolute;
    right: 16px;
    top: 0;
    font-size: 20px;
    line-height: 28px;
    color: #8a8a8a;
}
```
